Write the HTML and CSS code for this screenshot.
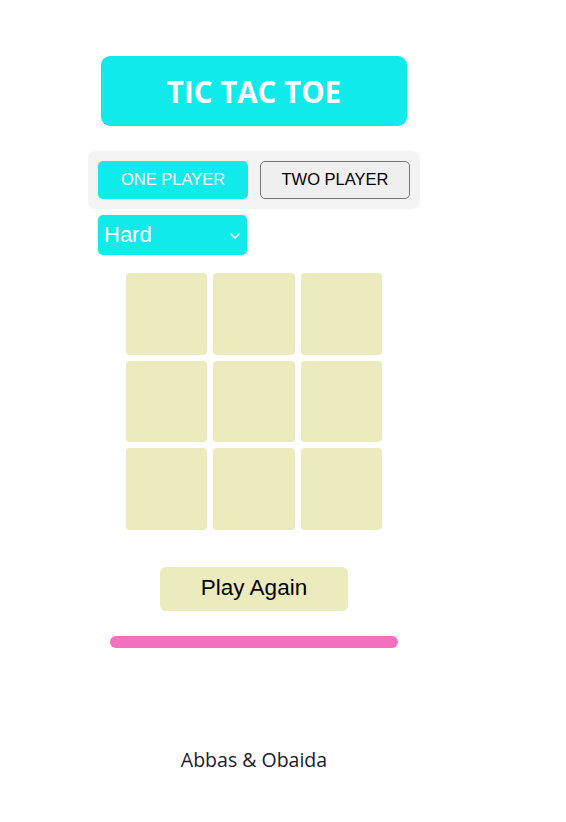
FILE: index.html
```html
<!DOCTYPE html>
<html>
<head>
<meta charset="utf-8">
<link rel="stylesheet" href="styles.css">
</head>
<body>
<main class="app">
  <h1 class="title">TIC TAC TOE</h1>
  <div class="modes">
    <button class="mode mode-active">ONE PLAYER</button>
    <button class="mode mode-plain">TWO PLAYER</button>
  </div>
  <div class="level-row">
    <div class="level">
      <span class="level-text">Hard</span>
      <svg class="chevron" width="10" height="6" viewBox="0 0 10 6"><path d="M1 1 L5 5 L9 1" fill="none" stroke="#fff" stroke-width="1.6" stroke-linecap="round" stroke-linejoin="round"/></svg>
    </div>
  </div>
  <div class="board">
    <div class="cell"></div><div class="cell"></div><div class="cell"></div>
    <div class="cell"></div><div class="cell"></div><div class="cell"></div>
    <div class="cell"></div><div class="cell"></div><div class="cell"></div>
  </div>
  <button class="again">Play Again</button>
  <div class="bar"></div>
  <footer class="credits">Abbas &amp; Obaida</footer>
</main>
</body>
</html>
```
FILE: styles.css
```css
html, body {
  margin: 0;
  padding: 0;
  background: #fff;
}
.app {
  width: 508px;
  display: flex;
  flex-direction: column;
  align-items: center;
  padding-top: 56px;
  font-family: "Liberation Sans", Arial, sans-serif;
}
.title {
  margin: 0;
  width: 306px;
  height: 70px;
  box-sizing: border-box;
  background: #11eaea;
  border-radius: 9px;
  color: #fff;
  font-family: "Open Sans", sans-serif;
  font-weight: 700;
  font-size: 29.5px;
  display: flex;
  align-items: center;
  justify-content: center;
}
.modes {
  margin-top: 25px;
  width: 332px;
  box-sizing: border-box;
  padding: 10px;
  background: #f3f3f3;
  border-radius: 8px;
  display: flex;
  gap: 12px;
}
.mode {
  width: 150px;
  height: 38px;
  box-sizing: border-box;
  border-radius: 5px;
  font-family: "Liberation Sans", Arial, sans-serif;
  font-size: 16.5px;
  padding: 0 0 2px 0;
}
.mode-active {
  background: #11eaea;
  color: #fff;
  border: none;
}
.mode-plain {
  background: #efefef;
  color: #000;
  border: 1px solid #767676;
}
.level-row {
  width: 312px;
  margin-top: 6px;
  display: flex;
}
.level {
  width: 149px;
  height: 40px;
  box-sizing: border-box;
  background: #11eaea;
  border-radius: 5px;
  display: flex;
  align-items: center;
  justify-content: space-between;
  padding: 0 7px 0 6px;
  color: #fff;
  font-size: 22px;
}
.level-text {
  line-height: 1;
}
.chevron {
  margin-top: 2px;
}
.board {
  margin-top: 18px;
  display: grid;
  grid-template-columns: 81px 82px 81px;
  grid-template-rows: 82px 81px 82px;
  column-gap: 6px;
  row-gap: 6px;
}
.cell {
  background: #ecebbd;
  border-radius: 4px;
}
.again {
  margin-top: 37px;
  width: 188px;
  height: 44px;
  border: none;
  border-radius: 6px;
  background: #ecebbd;
  color: #000;
  font-family: "Liberation Sans", Arial, sans-serif;
  font-size: 22.5px;
  padding: 0 0 2px 0;
}
.bar {
  margin-top: 25px;
  width: 288px;
  height: 12px;
  border-radius: 6px;
  background: #f370c0;
}
.credits {
  margin-top: 98px;
  font-family: "Open Sans", sans-serif;
  font-size: 19.5px;
  color: #1a1a2e;
}
```
